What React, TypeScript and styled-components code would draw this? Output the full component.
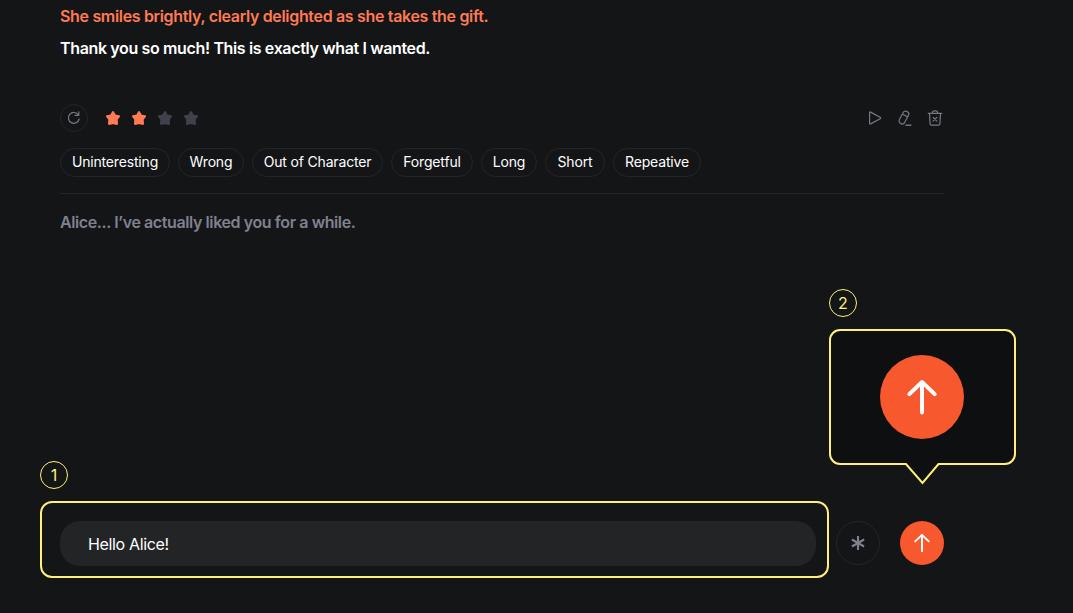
import styled, { createGlobalStyle } from 'styled-components';

const color = {
  background: '#141517',
  calloutBackground: '#0e0f10',
  input: '#232426',
  border: '#242529',
  white: '#ffffff',
  gray: '#7f818f',
  icon: '#777883',
  star: '#ff7a55',
  starEmpty: '#40414b',
  orange: '#f7582d',
  yellow: '#fff07c',
};

const FEEDBACKS = [
  { label: 'Uninteresting', width: 110 },
  { label: 'Wrong', width: 66 },
  { label: 'Out of Character', width: 131 },
  { label: 'Forgetful', width: 82 },
  { label: 'Long', width: 56 },
  { label: 'Short', width: 60 },
  { label: 'Repeative', width: 88 },
];

const RATING = 2;

const RefreshIcon = () => (
  <svg width="16" height="16" viewBox="0 0 16 16" fill="none" stroke={color.icon} strokeWidth="1.2">
    <path d="M12.4 5A5.4 5.4 0 1 0 13.1 9" strokeLinecap="round" />
    <path d="M12.8 1.8V5.4H9.1" strokeLinecap="round" strokeLinejoin="round" />
  </svg>
);

const StarIcon = ({ filled }: { filled: boolean }) => {
  const fill = filled ? color.star : color.starEmpty;

  return (
    <svg width="16" height="16" viewBox="0 0 16 16" fill={fill} stroke={fill}>
      <path
        d="M8 2L10 5.4L14.1 6.2L11.7 9.5L12 13.9L8 13L4 13.9L4.3 9.5L1.9 6.2L6 5.4Z"
        strokeWidth="2"
        strokeLinejoin="round"
      />
    </svg>
  );
};

const PlayIcon = () => (
  <svg width="16" height="16" viewBox="0 0 16 16" fill="none" stroke={color.icon}>
    <path d="M2.6 2.7V13.3Q2.6 14.4 3.6 13.9L13.1 8.8Q14.2 8 13.1 7.2L3.6 2.1Q2.6 1.6 2.6 2.7Z" strokeWidth="1.2" />
  </svg>
);

const EraserIcon = () => (
  <svg width="16" height="16" viewBox="0 0 16 16" fill="none" stroke={color.icon}>
    <rect x="3.9" y="0.8" width="6" height="13.4" rx="2.6" transform="rotate(28 6.9 7.5)" strokeWidth="1.2" />
    <path d="M5.8 4.3L11 7.1" strokeWidth="1.2" />
    <path d="M8.4 15.2H14.4" strokeWidth="1.4" />
  </svg>
);

const TrashIcon = () => (
  <svg width="16" height="16" viewBox="0 0 16 16" fill="none" stroke={color.icon} strokeLinecap="round">
    <path d="M1.3 3.4H14.7M5.2 3Q5.4 0.8 7 0.8H9Q10.6 0.8 10.8 3" strokeWidth="1.2" />
    <path d="M2.5 3.6L3.1 14Q3.2 15.2 4.4 15.2H11.6Q12.8 15.2 12.9 14L13.5 3.6" strokeWidth="1.2" />
    <path d="M6.1 7.4L9.9 11.2M9.9 7.4L6.1 11.2" strokeWidth="1.2" />
  </svg>
);

const AsteriskIcon = () => (
  <svg width="16" height="16" viewBox="0 0 16 16" fill="none" stroke={color.gray} strokeWidth="2.1">
    <path d="M8 1V15M1.9 4.5L14.1 11.5M14.1 4.5L1.9 11.5" />
  </svg>
);

const ArrowUpIcon = () => (
  <svg width="18" height="20" viewBox="0 0 18 20" fill="none" stroke={color.white}>
    <path
      d="M9 18.2V1.9M2.2 8.4L9 1.9L15.8 8.4"
      strokeWidth="2"
      strokeLinecap="round"
      strokeLinejoin="round"
    />
  </svg>
);

const LargeArrowUpIcon = () => (
  <svg width="32" height="38" viewBox="0 0 32 38" fill="none" stroke={color.white}>
    <path
      d="M16 34.5V4M3.3 16.1L16 4L28.7 16.1"
      strokeWidth="4"
      strokeLinecap="round"
      strokeLinejoin="round"
    />
  </svg>
);

const App = () => {
  return (
    <>
      <GlobalStyle />
      <ChatLayout>
        <MessageList>
          <Message $color={color.star} $spacing={-0.33}>
            She smiles brightly, clearly delighted as she takes the gift.
          </Message>
          <Message $color={color.white} $spacing={-0.36}>
            Thank you so much! This is exactly what I wanted.
          </Message>
        </MessageList>

        <ReviewBar>
          <RefreshButton aria-label="Regenerate">
            <RefreshIcon />
          </RefreshButton>
          <StarList>
            {[1, 2, 3, 4].map((score) => (
              <StarIcon key={score} filled={score <= RATING} />
            ))}
          </StarList>
          <ActionList>
            <PlayIcon />
            <EraserIcon />
            <TrashIcon />
          </ActionList>
        </ReviewBar>

        <FeedbackList>
          {FEEDBACKS.map(({ label, width }) => (
            <FeedbackChip key={label} $width={width}>
              {label}
            </FeedbackChip>
          ))}
        </FeedbackList>

        <UserMessage $color={color.gray} $spacing={-0.4}>
          Alice... I’ve actually liked you for a while.
        </UserMessage>

        <Footer>
          <StepNumber>1</StepNumber>
          <Composer>
            <InputHighlight>
              <InputBox>Hello Alice!</InputBox>
            </InputHighlight>
            <CommandButton aria-label="Commands">
              <AsteriskIcon />
            </CommandButton>
            <SendArea>
              <SendButton aria-label="Send">
                <ArrowUpIcon />
              </SendButton>
              <Callout>
                <StepNumber>2</StepNumber>
                <CalloutBody>
                  <CalloutShape width="187" height="156" viewBox="0 0 187 156">
                    <path
                      d="M11 1H176A10 10 0 0 1 186 11V125A10 10 0 0 1 176 135H109.5L93.5 154L77 135H11A10 10 0 0 1 1 125V11A10 10 0 0 1 11 1Z"
                      fill={color.calloutBackground}
                      stroke={color.yellow}
                      strokeWidth="2"
                    />
                  </CalloutShape>
                  <LargeSendButton>
                    <LargeArrowUpIcon />
                  </LargeSendButton>
                </CalloutBody>
              </Callout>
            </SendArea>
          </Composer>
        </Footer>
      </ChatLayout>
    </>
  );
};

export default App;

const GlobalStyle = createGlobalStyle`
  * {
    box-sizing: border-box;
  }

  body {
    margin: 0;
    background-color: ${color.background};
    font-family: Inter, 'Liberation Sans', sans-serif;
  }

  p {
    margin: 0;
  }

  svg {
    display: block;
    flex-shrink: 0;
  }
`;

const ChatLayout = styled.main`
  display: flex;
  flex-direction: column;

  width: 1073px;
  height: 613px;
  padding: 4px 129px 35px 60px;

  overflow: hidden;
  background-color: ${color.background};
`;

const MessageList = styled.div`
  display: flex;
  flex-direction: column;
  gap: 8px;
`;

const Message = styled.p<{ $color: string; $spacing: number }>`
  color: ${({ $color }) => $color};
  font-size: 16px;
  font-weight: 600;
  line-height: 24px;
  letter-spacing: ${({ $spacing }) => $spacing}px;
  white-space: nowrap;
`;

const ReviewBar = styled.div`
  display: flex;
  align-items: center;

  margin-top: 44px;
`;

const RefreshButton = styled.button`
  display: flex;
  align-items: center;
  justify-content: center;

  width: 28px;
  height: 28px;
  padding: 0;

  background: none;
  border: 1px solid ${color.border};
  border-radius: 50%;
`;

const StarList = styled.div`
  display: flex;
  gap: 10px;

  margin-left: 17px;
`;

const ActionList = styled.div`
  display: flex;
  gap: 14px;

  margin-left: auto;
  padding-right: 1px;
`;

const FeedbackList = styled.div`
  display: flex;
  gap: 8px;

  margin-top: 16px;
  padding-bottom: 16px;
  border-bottom: 1px solid ${color.border};
`;

const FeedbackChip = styled.button<{ $width: number }>`
  width: ${({ $width }) => $width}px;
  height: 29px;
  padding: 0 0 1px;

  background: none;
  border: 1px solid ${color.border};
  border-radius: 15px;

  color: ${color.white};
  font-family: inherit;
  font-size: 14px;
  font-weight: 400;
  line-height: 20px;
  letter-spacing: -0.17px;
  white-space: nowrap;
`;

const UserMessage = styled(Message)`
  margin-top: 16px;
`;

const Footer = styled.footer`
  display: flex;
  flex-direction: column;
  gap: 12px;

  margin-top: auto;
  margin-left: -20px;
`;

const StepNumber = styled.span`
  display: flex;
  align-items: center;
  justify-content: center;

  width: 28px;
  height: 28px;

  border: 1px solid ${color.yellow};
  border-radius: 50%;

  color: ${color.yellow};
  font-size: 16px;
  line-height: 24px;
`;

const Composer = styled.div`
  display: flex;
  align-items: center;
`;

const InputHighlight = styled.div`
  width: 789px;
  height: 77px;
  padding: 18px 11px 10px 18px;

  border: 2px solid ${color.yellow};
  border-radius: 12px;
`;

const InputBox = styled.div`
  display: flex;
  align-items: center;

  height: 45px;
  padding: 0 28px;

  background-color: ${color.input};
  border-radius: 20px;

  color: ${color.white};
  font-size: 16px;
  letter-spacing: -0.35px;
`;

const CommandButton = styled.button`
  display: flex;
  align-items: center;
  justify-content: center;

  width: 44px;
  height: 44px;
  margin: 7px 0 0 7px;
  padding: 0;

  background: none;
  border: 1px solid ${color.border};
  border-radius: 50%;
`;

const SendArea = styled.div`
  position: relative;

  margin: 7px 0 0 20px;
`;

const SendButton = styled.button`
  display: flex;
  align-items: center;
  justify-content: center;

  width: 44px;
  height: 44px;
  padding: 0;

  background-color: ${color.orange};
  border: none;
  border-radius: 50%;
`;

const Callout = styled.div`
  position: absolute;
  right: -72px;
  bottom: 80px;

  display: flex;
  flex-direction: column;
  gap: 12px;

  width: 187px;
`;

const CalloutBody = styled.div`
  position: relative;

  display: flex;
  justify-content: center;

  height: 156px;
  padding: 26px 1px 0 0;
`;

const CalloutShape = styled.svg`
  position: absolute;
  top: 0;
  left: 0;
`;

const LargeSendButton = styled.div`
  position: relative;

  display: flex;
  align-items: center;
  justify-content: center;

  width: 84px;
  height: 84px;

  background-color: ${color.orange};
  border-radius: 50%;
`;
